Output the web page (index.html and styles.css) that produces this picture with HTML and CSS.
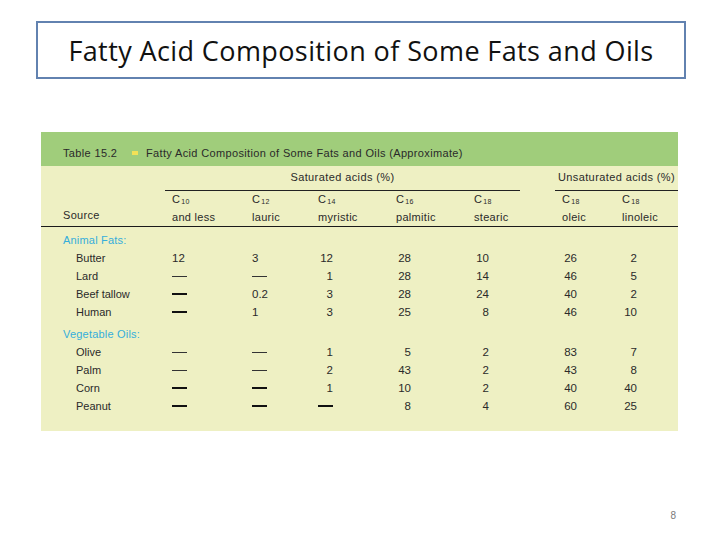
FILE: index.html
```html
<!DOCTYPE html>
<html>
<head>
<meta charset="utf-8">
<link rel="stylesheet" href="styles.css">
</head>
<body>
<div class="slide">
  <div class="title-box"><h1 class="title">Fatty Acid Composition of Some Fats and Oils</h1></div>

  <div class="table">
    <div class="caption"><span class="tnum">Table 15.2</span><span class="bullet"></span><span class="ctext">Fatty Acid Composition of Some Fats and Oils (Approximate)</span></div>

    <div class="groups">
      <div class="group sat">Saturated acids (%)</div>
      <div class="group unsat">Unsaturated acids (%)</div>
    </div>

    <div class="grid head">
      <div class="hsrc">Source</div>
      <div>C<sub>10</sub><br>and less</div>
      <div>C<sub>12</sub><br>lauric</div>
      <div>C<sub>14</sub><br>myristic</div>
      <div>C<sub>16</sub><br>palmitic</div>
      <div>C<sub>18</sub><br>stearic</div>
      <div>C<sub>18</sub><br>oleic</div>
      <div>C<sub>18</sub><br>linoleic</div>
    </div>

    <div class="body">
      <div class="cat">Animal Fats:</div>
      <div class="grid row">
        <div class="name">Butter</div>
        <div><span class="n l">12</span></div><div><span class="n l">3</span></div><div><span class="n">12</span></div><div><span class="n">28</span></div><div><span class="n">10</span></div><div><span class="n">26</span></div><div><span class="n">2</span></div>
      </div>
      <div class="grid row">
        <div class="name">Lard</div>
        <div><span class="dash"></span></div><div><span class="dash"></span></div><div><span class="n">1</span></div><div><span class="n">28</span></div><div><span class="n">14</span></div><div><span class="n">46</span></div><div><span class="n">5</span></div>
      </div>
      <div class="grid row">
        <div class="name">Beef tallow</div>
        <div><span class="dash bold"></span></div><div><span class="n l">0.2</span></div><div><span class="n">3</span></div><div><span class="n">28</span></div><div><span class="n">24</span></div><div><span class="n">40</span></div><div><span class="n">2</span></div>
      </div>
      <div class="grid row">
        <div class="name">Human</div>
        <div><span class="dash bold"></span></div><div><span class="n l">1</span></div><div><span class="n">3</span></div><div><span class="n">25</span></div><div><span class="n">8</span></div><div><span class="n">46</span></div><div><span class="n">10</span></div>
      </div>

      <div class="cat veg">Vegetable Oils:</div>
      <div class="grid row">
        <div class="name">Olive</div>
        <div><span class="dash"></span></div><div><span class="dash"></span></div><div><span class="n">1</span></div><div><span class="n">5</span></div><div><span class="n">2</span></div><div><span class="n">83</span></div><div><span class="n">7</span></div>
      </div>
      <div class="grid row">
        <div class="name">Palm</div>
        <div><span class="dash"></span></div><div><span class="dash"></span></div><div><span class="n">2</span></div><div><span class="n">43</span></div><div><span class="n">2</span></div><div><span class="n">43</span></div><div><span class="n">8</span></div>
      </div>
      <div class="grid row">
        <div class="name">Corn</div>
        <div><span class="dash bold"></span></div><div><span class="dash bold"></span></div><div><span class="n">1</span></div><div><span class="n">10</span></div><div><span class="n">2</span></div><div><span class="n">40</span></div><div><span class="n">40</span></div>
      </div>
      <div class="grid row">
        <div class="name">Peanut</div>
        <div><span class="dash bold"></span></div><div><span class="dash bold"></span></div><div><span class="dash bold"></span></div><div><span class="n">8</span></div><div><span class="n">4</span></div><div><span class="n">60</span></div><div><span class="n">25</span></div>
      </div>
    </div>
  </div>

  <div class="pagenum">8</div>
</div>
</body>
</html>
```

FILE: styles.css
```css
* { box-sizing: border-box; }
html, body { margin: 0; padding: 0; background: #ffffff; }
.slide {
  width: 720px;
  height: 540px;
  padding-top: 21px;
  display: flex;
  flex-direction: column;
  font-family: "Liberation Sans", Arial, sans-serif;
}
.title-box {
  margin-left: 36px;
  width: 650px;
  height: 58px;
  border: 2px solid #6282b0;
  display: flex;
  align-items: center;
  justify-content: center;
}
.title {
  margin: 0;
  font-family: "Open Sans", "Liberation Sans", sans-serif;
  font-weight: 400;
  font-size: 27px;
  color: #111;
  letter-spacing: 0.4px;
}
.table {
  margin-top: 53px;
  margin-left: 41px;
  width: 637px;
  height: 299px;
  background: #eef0c3;
  font-size: 11px;
  color: #2a2a2a;
}
.caption {
  height: 34px;
  background: #a0cd7b;
  display: flex;
  align-items: center;
  padding-left: 22px;
  padding-top: 7px;
  letter-spacing: 0.35px;
}
.tnum { width: 69px; }
.bullet {
  width: 6px;
  height: 4px;
  background: #f3e157;
  margin-right: 8px;
}
.groups {
  display: flex;
  height: 25px;
  padding-top: 5px;
}
.group {
  border-bottom: 1px solid #222;
  text-align: center;
  letter-spacing: 0.4px;
}
.sat { margin-left: 124px; width: 355px; }
.unsat { margin-left: 35px; width: 123px; }
.grid {
  display: grid;
  grid-template-columns: 109px 80px 66px 78px 78px 88px 60px 1fr;
  padding-left: 22px;
}
.head {
  line-height: 16px;
  padding-top: 0;
  padding-bottom: 1px;
  border-bottom: 1.5px solid #1a1a1a;
  letter-spacing: 0.3px;
}
.head sub {
  font-size: 7px;
  vertical-align: baseline;
  position: relative;
  top: 1px;
  margin-left: 1px;
}
.hsrc { padding-top: 16px; }
.body { padding-top: 4px; }
.cat {
  height: 18px;
  line-height: 18px;
  padding-left: 22px;
  color: #35aedb;
  letter-spacing: 0.2px;
}
.veg { margin-top: 4px; }
.row {
  height: 18px;
  line-height: 18px;
  align-items: center;
}
.row > div { height: 18px; display: flex; align-items: center; }
.name { padding-left: 13px; }
.n {
  display: inline-block;
  width: 15px;
  text-align: right;
  white-space: nowrap;
  font-size: 11.5px;
  line-height: 18px;
}
.n.l { text-align: left; }
.dash {
  display: inline-block;
  width: 15px;
  border-top: 1px solid #333;
}
.dash.bold { border-top: 2px solid #111; }
.pagenum {
  margin-top: auto;
  margin-bottom: 19px;
  align-self: flex-end;
  margin-right: 44px;
  font-size: 10px;
  color: #7a7a7a;
}
```
